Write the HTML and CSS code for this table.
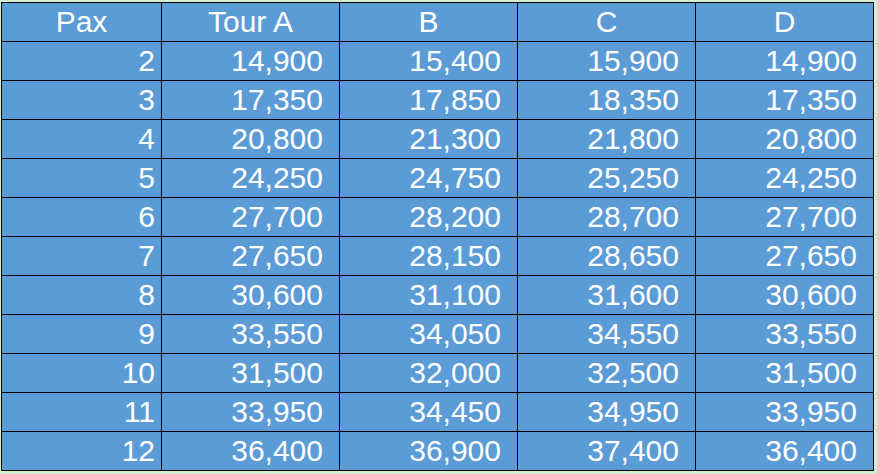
FILE: index.html
```html
<!DOCTYPE html>
<html>
<head>
<meta charset="utf-8">
<link rel="stylesheet" href="styles.css">
</head>
<body>
<table class="price">
<colgroup>
<col class="c-pax"><col class="c-tour"><col class="c-tour"><col class="c-tour"><col class="c-tour">
</colgroup>
<thead>
<tr><th>Pax</th><th>Tour A</th><th>B</th><th>C</th><th>D</th></tr>
</thead>
<tbody>
<tr><td>2</td><td>14,900</td><td>15,400</td><td>15,900</td><td>14,900</td></tr>
<tr><td>3</td><td>17,350</td><td>17,850</td><td>18,350</td><td>17,350</td></tr>
<tr><td>4</td><td>20,800</td><td>21,300</td><td>21,800</td><td>20,800</td></tr>
<tr><td>5</td><td>24,250</td><td>24,750</td><td>25,250</td><td>24,250</td></tr>
<tr><td>6</td><td>27,700</td><td>28,200</td><td>28,700</td><td>27,700</td></tr>
<tr><td>7</td><td>27,650</td><td>28,150</td><td>28,650</td><td>27,650</td></tr>
<tr><td>8</td><td>30,600</td><td>31,100</td><td>31,600</td><td>30,600</td></tr>
<tr><td>9</td><td>33,550</td><td>34,050</td><td>34,550</td><td>33,550</td></tr>
<tr><td>10</td><td>31,500</td><td>32,000</td><td>32,500</td><td>31,500</td></tr>
<tr><td>11</td><td>33,950</td><td>34,450</td><td>34,950</td><td>33,950</td></tr>
<tr><td>12</td><td>36,400</td><td>36,900</td><td>37,400</td><td>36,400</td></tr>
</tbody>
</table>
</body>
</html>
```
FILE: styles.css
```css
html, body {
  margin: 0;
  background: #d3edd2;
}
body {
  padding: 2px 0 0 1px;
  font-family: "Liberation Sans", Arial, Helvetica, sans-serif;
}
.price {
  border-collapse: collapse;
  table-layout: fixed;
  width: 873px;
  background: #5b9bd6;
  color: #ffffff;
  font-size: 30px;
}
.c-pax { width: 160px; }
.c-tour { width: 178px; }
.price th,
.price td {
  border: 1px solid #000000;
  height: 38px;
  line-height: 38px;
  padding: 0 16px 0 0;
  white-space: nowrap;
  font-weight: normal;
  vertical-align: middle;
}
.price th {
  text-align: center;
  padding: 0;
}
.price td {
  text-align: right;
}
.price td:first-child {
  padding-right: 6px;
}
```
